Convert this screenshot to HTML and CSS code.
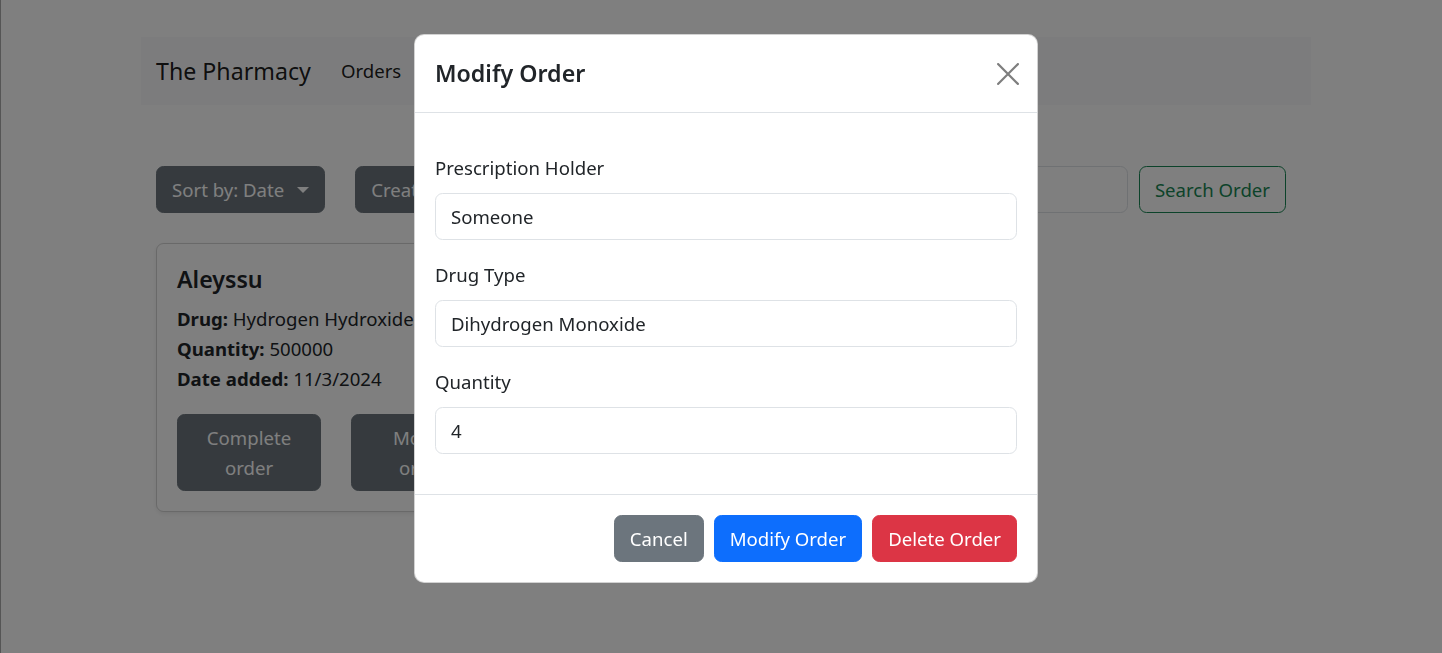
FILE: index.html
```html
<!DOCTYPE html>
<html lang="en">
<head>
<meta charset="utf-8">
<title>The Pharmacy</title>
<link rel="stylesheet" href="styles.css">
</head>
<body>
<div class="page">
  <nav class="navbar">
    <a class="brand" href="#">The Pharmacy</a>
    <a class="nav-link" href="#">Orders</a>
  </nav>
  <main class="content">
    <div class="toolbar">
      <button class="btn btn-secondary dropdown-toggle" type="button">Sort by: Date</button>
      <button class="btn btn-secondary create-btn" type="button">Create Order</button>
      <form class="search">
        <input class="form-control search-input" type="search" placeholder="Search">
        <button class="btn btn-outline-success" type="button">Search Order</button>
      </form>
    </div>
    <div class="card">
      <h5 class="card-title">Aleyssu</h5>
      <p class="card-line"><b>Drug:</b> Hydrogen Hydroxide</p>
      <p class="card-line"><b>Quantity:</b> 500000</p>
      <p class="card-line"><b>Date added:</b> 11/3/2024</p>
      <div class="card-actions">
        <button class="btn btn-secondary card-btn" type="button">Complete order</button>
        <button class="btn btn-secondary card-btn" type="button">Modify order</button>
        <button class="btn btn-secondary card-btn" type="button">Delete order</button>
      </div>
    </div>
  </main>
</div>

<div class="backdrop"></div>

<div class="modal-layer">
  <div class="modal">
    <div class="modal-header">
      <h1 class="modal-title">Modify Order</h1>
      <button class="btn-close" type="button" aria-label="Close">
        <svg viewBox="0 0 20 20" width="22" height="22"><path d="M1 1 L19 19 M19 1 L1 19" stroke="#000" stroke-width="2" stroke-linecap="square"/></svg>
      </button>
    </div>
    <div class="modal-body">
      <div class="field">
        <label class="form-label">Prescription Holder</label>
        <input class="form-control" type="text" value="Someone">
      </div>
      <div class="field">
        <label class="form-label">Drug Type</label>
        <input class="form-control" type="text" value="Dihydrogen Monoxide">
      </div>
      <div class="field">
        <label class="form-label">Quantity</label>
        <input class="form-control" type="text" value="4">
      </div>
    </div>
    <div class="modal-footer">
      <button class="btn btn-secondary" type="button">Cancel</button>
      <button class="btn btn-primary" type="button">Modify Order</button>
      <button class="btn btn-danger" type="button">Delete Order</button>
    </div>
  </div>
</div>
</body>
</html>
```
FILE: styles.css
```css
* { box-sizing: border-box; }

html, body {
  margin: 0;
  height: 100%;
}

body {
  font-family: "Noto Sans", "Open Sans", sans-serif;
  font-size: 18.6px;
  line-height: 30px;
  color: #212529;
  background: #fff;
  border-left: 1px solid #aaa;
  overflow: hidden;
}

.page {
  padding: 37px 0 0 140px;
  width: 1310px;
}

/* navbar */
.navbar {
  display: flex;
  align-items: center;
  height: 68px;
  padding: 0 15px;
  background: #f8f9fa;
}

.brand {
  font-size: 23.2px;
  color: rgba(0, 0, 0, .9);
  text-decoration: none;
  margin-right: 20px;
}

.nav-link {
  padding: 0 10px;
  color: rgba(0, 0, 0, .9);
  text-decoration: none;
}

/* content */
.content {
  padding: 0 15px;
  margin-top: 61px;
}

.toolbar {
  display: flex;
  align-items: center;
}

.btn {
  font-family: inherit;
  font-size: 18.6px;
  line-height: 30px;
  padding: 7.5px 15px;
  border: 1px solid transparent;
  border-radius: 7.5px;
  color: #fff;
  background: transparent;
  cursor: pointer;
}

.btn-secondary { background: #6c757d; border-color: #6c757d; }
.btn-primary { background: #0d6efd; border-color: #0d6efd; }
.btn-danger { background: #dc3545; border-color: #dc3545; }
.btn-outline-success { color: #198754; border-color: #198754; }

.dropdown-toggle::after {
  content: "";
  display: inline-block;
  margin-left: 13px;
  vertical-align: 4px;
  border-top: 6px solid;
  border-right: 6px solid transparent;
  border-left: 6px solid transparent;
}

.create-btn { margin-left: 30px; }

.search {
  display: flex;
  gap: 11px;
  margin: 0 10px 0 auto;
}

.form-control {
  display: block;
  width: 100%;
  font-family: inherit;
  font-size: 18.6px;
  line-height: 30px;
  padding: 7.5px 15px;
  color: #212529;
  background: #fff;
  border: 1px solid #dee2e6;
  border-radius: 7.5px;
}

.search-input { width: 300px; }

/* card */
.card {
  width: 560px;
  margin-top: 30px;
  padding: 20px;
  border: 1px solid rgba(0, 0, 0, .175);
  border-radius: 7.5px;
  box-shadow: 0 2px 4px rgba(0, 0, 0, .075);
}

.card-title {
  margin: 0 0 10px;
  font-size: 23.2px;
  font-weight: 600;
  line-height: 30px;
}

.card-line {
  margin: 0;
}

.card-actions {
  display: flex;
  gap: 30px;
  margin-top: 20px;
}

.card-btn { width: 144px; }

/* modal */
.backdrop {
  position: fixed;
  inset: 0;
  background: rgba(0, 0, 0, .5);
}

.modal-layer {
  position: fixed;
  inset: 0;
  padding: 34px 0 0 414px;
}

.modal {
  width: 624px;
  background: #fff;
  border: 1px solid rgba(0, 0, 0, .175);
  border-radius: 10px;
}

.modal-header {
  display: flex;
  align-items: center;
  justify-content: space-between;
  padding: 20px;
  border-bottom: 1px solid #dee2e6;
}

.modal-title {
  margin: 0;
  font-size: 23.2px;
  font-weight: 600;
  line-height: 37px;
}

.btn-close {
  display: flex;
  align-items: center;
  justify-content: center;
  width: 30px;
  height: 30px;
  padding: 0;
  margin-right: -6px;
  border: 0;
  background: transparent;
  opacity: .5;
  cursor: pointer;
}

.modal-body {
  padding: 20px;
}

.field {
  margin: 20px 0;
}

.form-label {
  display: block;
  margin-bottom: 10px;
}

.modal-footer {
  display: flex;
  justify-content: flex-end;
  gap: 10px;
  padding: 20px;
  border-top: 1px solid #dee2e6;
}
```
